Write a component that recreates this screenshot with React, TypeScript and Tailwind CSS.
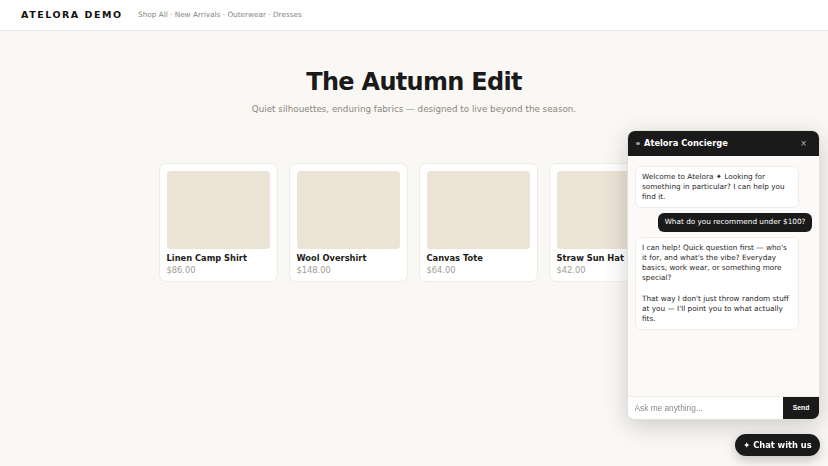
import React from 'react';

const products = [
    { name: 'Linen Camp Shirt', price: '$86.00' },
    { name: 'Wool Overshirt', price: '$148.00' },
    { name: 'Canvas Tote', price: '$64.00' },
    { name: 'Straw Sun Hat', price: '$42.00' },
];

const ProductCard: React.FC<{ name: string; price: string }> = ({ name, price }) => (
    <div className="w-[119px] rounded-[7px] border border-[#efebe5] bg-white p-[7px] pb-[5px]">
        <div className="h-[78px] w-full rounded-[4px] bg-[#ebe3d6]" />
        <div className="mt-[4.5px] text-[8.3px] font-bold leading-[11.5px] text-[#1c1a17]">{name}</div>
        <div className="text-[8.3px] leading-[11.5px] text-[#a39d94]">{price}</div>
    </div>
);

const ChatWidget: React.FC = () => (
    <>
        <div className="fixed right-[8px] top-[130px] flex h-[290px] w-[193px] flex-col overflow-hidden rounded-[8px] border border-[#e4e0da] bg-white shadow-[0_6px_24px_rgba(0,0,0,0.18)]">
            <div className="flex h-[25px] shrink-0 items-center justify-between bg-[#1a1a1a] pl-[8px] pr-[12px]">
                <div className="flex items-center gap-[4.5px]">
                    <span className="h-[3.5px] w-[3.5px] rounded-full bg-[#9a9690]" />
                    <span className="text-[8.3px] font-bold text-white">Atelora Concierge</span>
                </div>
                <span className="text-[8px] leading-none text-[#bdbab5]">×</span>
            </div>

            <div className="flex flex-1 flex-col gap-[5px] bg-[#fbfaf8] px-[7px] pt-[9.5px] text-[7.3px] leading-[10.2px]">
                <div className="max-w-[164px] self-start rounded-[6px] border border-[#f0ede8] bg-white px-[6px] py-[5px] text-[#2a2824]">
                    Welcome to Atelora ✦ Looking for something in particular? I can help you find it.
                </div>
                <div className="self-end rounded-[6px] bg-[#1a1a1a] px-[6.5px] py-[4.2px] text-white">
                    What do you recommend under $100?
                </div>
                <div className="max-w-[164px] self-start rounded-[6px] border border-[#f0ede8] bg-white px-[6px] py-[5px] text-[#2a2824]">
                    <p>I can help! Quick question first — who's it for, and what's the vibe? Everyday basics, work wear, or something more special?</p>
                    <p className="mt-[10.2px]">That way I don't just throw random stuff at you — I'll point you to what actually fits.</p>
                </div>
            </div>

            <div className="flex h-[23px] shrink-0 border-t border-[#eeebe6] bg-white font-['Liberation_Sans',Arial,sans-serif]">
                <input
                    className="min-w-0 flex-1 bg-white px-[6.5px] text-[8.3px] text-[#333] outline-none placeholder:text-[#8c8882]"
                    placeholder="Ask me anything..."
                />
                <button className="w-[36px] bg-[#1a1a1a] text-[6.8px] font-bold text-white">Send</button>
            </div>
        </div>

        <button className="fixed bottom-[10px] right-[8px] flex h-[22px] w-[85px] items-center justify-center rounded-full bg-[#1a1a1a] text-[8.3px] font-bold text-white shadow-[0_4px_12px_rgba(0,0,0,0.22)]">
            ✦ Chat with us
        </button>
    </>
);

export default function App() {
    return (
        <div className="min-h-screen bg-[#faf8f4] font-['DejaVu_Sans',sans-serif]">
            <header className="flex h-[31px] items-center gap-[15.5px] border-b border-[#ece9e4] bg-white px-[21px]">
                <div className="text-[9.5px] font-bold tracking-[0.16em] text-[#111]">ATELORA DEMO</div>
                <nav className="text-[7.3px] text-[#8a857e]">Shop All · New Arrivals · Outerwear · Dresses</nav>
            </header>

            <main className="flex flex-col items-center pt-[37px]">
                <h1 className="text-[24px] font-bold leading-[29px] tracking-[-0.7px] text-[#1a1a1a]">The Autumn Edit</h1>
                <p className="mt-[5.5px] text-[8.75px] leading-[12px] text-[#8a857e]">
                    Quiet silhouettes, enduring fabrics — designed to live beyond the season.
                </p>

                <div className="-ml-[2px] mt-[48px] flex gap-[11px]">
                    {products.map((p) => (
                        <ProductCard key={p.name} name={p.name} price={p.price} />
                    ))}
                </div>
            </main>

            <ChatWidget />
        </div>
    );
}
